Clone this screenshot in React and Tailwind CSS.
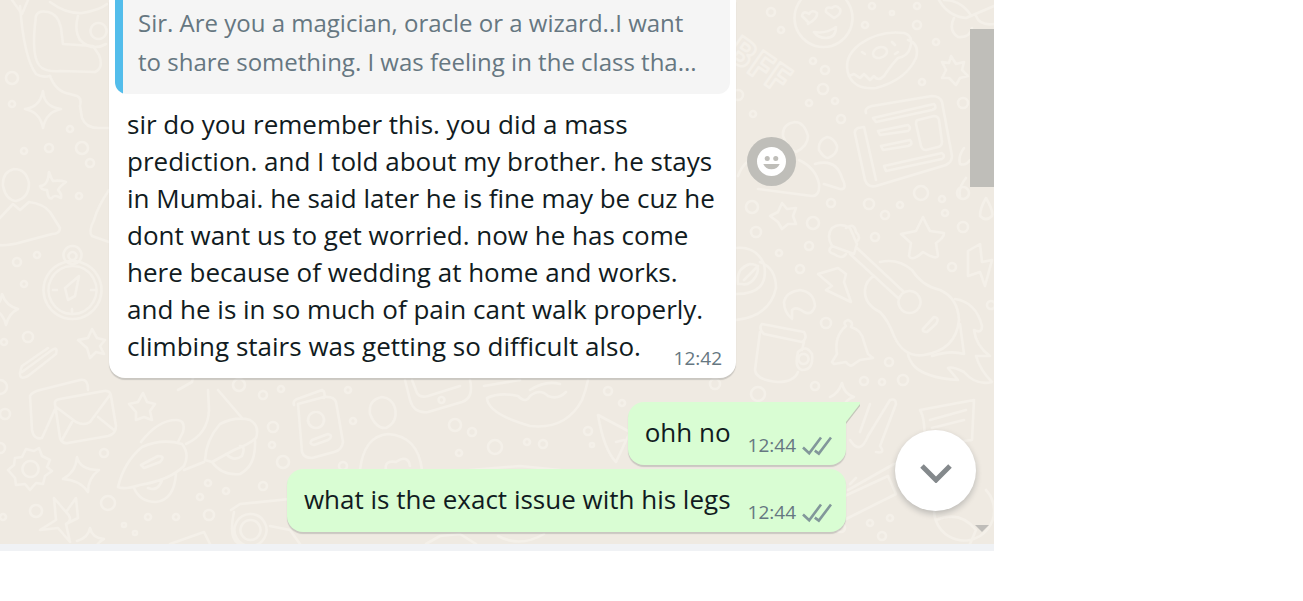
const quoteLines = [
  "Sir. Are you a magician, oracle or a wizard..I want",
  "to share something. I was feeling in the class tha...",
];

const messageLines = [
  "sir do you remember this. you did a mass",
  "prediction. and I told about my brother. he stays",
  "in Mumbai. he said later he is fine may be cuz he",
  "dont want us to get worried. now he has come",
  "here because of wedding at home and works.",
  "and he is in so much of pain cant walk properly.",
  "climbing stairs was getting so difficult also.",
];

const replies = [
  { text: "ohh no", time: "12:44", tail: true },
  { text: "what is the exact issue with his legs", time: "12:44", tail: false },
];

// x, y, radius
const dots = [
  [12, 78, 7], [12, 104, 4], [70, 129, 4], [24, 151, 4], [49, 148, 5], [82, 148, 7],
  [90, 163, 5], [79, 196, 4], [17, 262, 5], [37, 255, 4], [24, 284, 4], [4, 342, 4],
  [28, 337, 6], [5, 414, 6], [0, 387, 8], [0, 448, 6], [104, 453, 5], [36, 511, 7],
  [108, 503, 8], [3, 517, 4], [148, 517, 4], [124, 525, 3], [135, 533, 3], [176, 517, 4],
  [209, 515, 6], [200, 497, 4], [208, 483, 4], [226, 491, 4], [263, 486, 5], [283, 462, 7],
  [273, 427, 6], [272, 445, 4], [263, 395, 5], [281, 389, 4], [239, 385, 7], [348, 390, 4],
  [353, 421, 4], [455, 425, 7], [472, 432, 5], [495, 447, 8], [459, 453, 4], [527, 442, 4],
  [543, 444, 5], [588, 431, 5], [592, 445, 3], [608, 391, 5], [622, 403, 4], [343, 466, 5],
  [715, 384, 6], [758, 394, 8], [815, 386, 5], [841, 528, 5], [870, 523, 4], [882, 536, 5],
  [890, 518, 4], [771, 12, 5], [781, 30, 4], [872, 6, 4], [892, 13, 3], [917, 6, 4],
  [917, 25, 5], [865, 25, 4], [936, 42, 4], [922, 82, 4], [813, 61, 4], [825, 70, 5],
  [823, 89, 6], [809, 103, 4], [835, 101, 4], [841, 119, 5], [753, 114, 4], [738, 95, 6],
  [963, 103, 6], [985, 55, 5], [988, 75, 4], [921, 193, 8], [942, 199, 4], [752, 207, 7],
  [756, 232, 6], [831, 203, 5], [869, 204, 6], [885, 215, 5], [900, 205, 4], [813, 223, 7],
  [809, 246, 5], [779, 253, 4], [800, 269, 5], [875, 237, 5], [963, 193, 7], [945, 213, 4],
  [963, 227, 6], [952, 267, 5], [991, 305, 5], [826, 323, 6], [889, 362, 5], [864, 381, 5],
  [882, 382, 4], [903, 380, 6],
];

const doodles = [
  // mug and hands, top left
  "M20 6Q24 58 36 74Q42 78 50 76M36 16Q30 60 42 68Q48 72 60 71L95 72Q104 68 99 55L93 46L63 44L61 28Q58 14 48 12Q38 10 36 16M50 2Q66 14 82 13Q100 10 107 4",
  "M50 76Q56 92 70 94L77 96Q82 98 80 106L82 118Q86 128 98 128L109 128",
  "M78 16Q74 30 80 40Q92 52 106 44M98 23a8 8 0 1 0 1 0M12 0L22 14L28 0",
  // sparkles
  "M43 91Q44 107 61 109Q46 112 43 128Q40 112 25 109Q40 107 43 91Z",
  "M49 172Q51 178 53 181Q60 180 66 182Q60 186 58 190Q62 194 61 198Q54 194 52 198Q48 200 47 190Q41 190 40 186Q48 186 49 172Z",
  "M2 294Q6 306 18 309Q9 313 6 325Q3 312 -8 309Q0 306 2 294Z",
  "M77 457Q80 470 99 470Q88 478 88 492Q80 480 63 479Q76 472 77 457Z",
  "M90 528Q92 538 104 539Q96 543 94 552M77 541Q88 538 90 528",
  "M842 383Q844 394 854 397Q845 399 842 410M842 383Q838 394 830 397",
  // people, left
  "M14 169Q2 172 3 186Q6 200 16 201Q29 198 29 183Q26 169 14 169M-2 220L13 204L20 210L29 202Q44 204 50 212L60 228Q60 234 52 234L22 242Q8 246 -2 245",
  "M109 190Q98 206 94 220Q88 232 92 236L109 242",
  // compass
  "M72 261a29 29 0 1 0 1 0M72 266a24 24 0 1 0 1 0M72 246a9 9 0 1 0 1 0M72 252a4 4 0 1 0 1 0M79 276L65 288L68 300L75 296ZM53 290h4M91 290h4M72 309v3",
  // paper clip
  "M22 372L52 350Q58 346 56 354L28 376Q16 382 22 366L48 348",
  // envelopes
  "M56 407L42 438Q34 440 32 430L30 396Q32 392 40 390L80 380Q88 378 88 390M55 404Q54 400 60 399L104 391Q110 390 111 396L116 426Q116 434 108 436L68 443Q62 444 60 438ZM56 407L76 422Q84 426 90 422L110 395M62 440L72 422M114 430L98 417",
  // gear
  "M26 449L34 451L39 448L42 456L50 460L47 467L52 471L45 476L43 484L36 483L30 490L25 484L16 485L15 478L8 470L14 465L15 458L22 457ZM30 461a8 8 0 1 0 1 0",
  // scooter
  "M118 487Q124 462 142 447Q162 438 182 444Q190 454 184 466Q170 480 140 485Q124 490 118 487M141 442Q158 420 176 420Q186 420 183 432L178 442M141 465L158 456Q166 456 160 462L144 468ZM134 488Q140 502 156 502Q174 500 176 474M148 488Q158 492 162 480M186 444Q208 434 209 410L208 390M218 390L242 418M184 470L204 462M205 460Q206 440 220 424Q236 416 250 420Q260 426 256 438Q250 444 234 450L212 462ZM212 462Q222 476 240 474Q256 466 255 441M226 454Q234 462 242 456Q246 446 240 446M178 390L192 382L194 374",
  // flower cross
  "M54 498L66 512L76 498L78 518L66 524L70 542L58 528L40 530L56 520ZM66 512Q74 520 66 524",
  // passport
  "M294 405Q292 400 300 398L322 390Q326 392 324 398M298 404L324 397Q334 396 336 402L343 442Q342 450 334 452L312 458Q304 458 302 452ZM315 412a8 8 0 1 0 2 0M312 440L328 434Q334 436 328 440L314 445Q308 444 312 440",
  // person
  "M382 397Q368 400 370 414Q376 429 386 428Q398 422 395 408Q392 398 382 397M360 470Q364 436 388 434Q418 436 422 470M386 470Q384 460 396 462Q408 454 410 466",
  // tablet
  "M405 380L410 400Q414 414 428 412L462 402Q474 398 470 380M412 380L417 393Q420 398 428 396L460 386M441 397a3 3 0 1 0 1 0",
  // pizza
  "M484 386L520 380M487 398Q500 392 518 396Q526 404 530 396Q540 388 548 396Q558 400 566 392M487 398Q488 414 530 426Q566 430 582 400Q586 390 588 380M530 390Q546 380 560 384",
  // triangle by the reply
  "M598 415L630 432L616 462Q604 450 598 415M616 442L624 440",
  // camera
  "M231 510L240 504L300 498M234 512Q228 540 240 544M250 514a16 16 0 1 0 1 0M250 520a10 10 0 1 0 1 0M270 526L290 530L300 544",
  "M170 544L204 532L210 544M470 470L520 466L560 470M426 544L440 536L460 534L476 544M498 536Q520 548 544 534",
  // heart-eyed face
  "M823 -11a29 29 0 1 0 1 0M808 22L802 16Q803 10 809 14Q812 9 817 13Q818 18 808 24ZM834 18L826 12Q825 6 832 8Q836 4 840 9Q842 14 834 18M814 32Q826 34 836 27Q836 38 826 38Q818 38 814 32",
  // donut
  "M849 76Q842 58 860 44Q880 30 904 33Q914 36 910 48Q908 56 898 58Q892 64 884 76Q878 82 874 76L870 80L864 74L860 78L854 74ZM849 76Q856 90 876 88Q906 80 916 58Q920 44 908 40M873 54a7 5 -20 1 0 14 -3a7 5 -20 1 0 -14 3M862 52l3 2M892 42l3 3M895 54l3 -2",
  // newspaper
  "M866 113Q864 108 872 106L932 96Q940 96 942 102L952 156Q952 162 946 165L876 186Q868 188 865 180L855 134Q854 130 858 128L864 127L876 180M873 118L934 104Q938 108 932 110L876 122ZM878 131L908 125Q912 128 908 131L880 135ZM881 146L910 140Q914 144 908 146L883 150ZM884 166L942 153Q946 156 942 159L886 171ZM918 120L934 116Q938 116 939 120L942 142Q942 146 938 147L926 150Q922 150 921 146L916 124Q916 120 918 120",
  // family
  "M795 122Q782 124 783 136Q788 150 796 152Q808 146 808 136Q804 122 795 122M827 137Q818 140 819 150Q824 158 828 158Q838 154 837 146Q834 138 827 137M799 160Q816 168 819 184Q820 196 812 196L758 189M815 164Q836 158 842 178Q848 190 840 189L824 184M738 176Q744 160 756 158",
  // baby, top right
  "M939 0Q948 16 966 18Q980 12 994 6M954 18Q948 30 958 37Q970 38 972 28M976 16Q980 26 994 24M944 0Q960 0 970 14",
  // stars
  "M951 56L956 64L964 62L962 70L968 76L960 78L956 85L949 78L942 78L946 70L942 62L949 63Z",
  "M782 203L787 209L796 208L793 216L796 224L788 224L782 229L778 222L770 216L778 212Z",
  "M92 329L97 338L105 340L100 346L104 354L96 352L90 358L87 348L78 340L88 338Z",
  "M143 393L147 402L155 404L150 411L152 420L144 417L136 420L136 412L129 404L138 402Z",
  "M923 217Q926 224 930 231L944 233Q944 238 936 243L938 256Q936 260 923 252Q912 262 909 256L911 243L901 234L916 231Z",
  // drops
  "M986 198Q994 212 992 216Q986 222 980 216Q980 208 986 198M964 148Q958 156 960 164Q966 166 970 160M966 178Q958 188 960 196",
  // bolts
  "M818 274L838 268L846 274L844 282L851 302L826 290L832 286Z",
  "M968 251L980 244L982 262L992 260L985 286L980 272L968 276Z",
  // camera lens
  "M736 248Q756 246 764 264Q770 294 736 294M760 262Q776 268 776 288Q770 316 736 320M738 284Q736 268 750 264Q762 264 756 276Q750 286 742 284ZM744 280L758 266",
  // cashew
  "M792 319Q784 312 784 302Q786 292 800 290Q814 292 815 306Q812 316 804 312Q796 306 792 310Z",
  // guitar
  "M854 254L832 246Q826 236 832 228Q840 222 850 228L857 244ZM846 228Q854 222 856 232Q862 238 856 242M832 246Q826 252 834 254Q842 260 846 254M857 248L904 292M850 254L898 298M909 291a11 11 0 1 0 1 0M880 262Q898 258 912 270Q922 286 940 290Q958 298 959 320Q956 350 924 355Q904 358 894 336Q888 320 880 312Q864 304 865 290Q866 280 874 276M923 329L934 317Q940 318 936 324L927 332Q922 332 923 329",
  "M955 299Q976 302 982 326Q982 334 974 330Q976 346 990 356L976 356Q980 370 992 382Q976 386 964 372Q952 366 948 368L958 380Q926 378 914 366Q908 358 908 354M960 324L964 354Q950 350 932 356",
  // beer mug
  "M762 324L804 332Q808 338 802 342L764 334Q758 328 762 324M760 332L755 370Q756 380 778 382Q794 382 798 372M804 342L802 350M798 352Q806 344 812 354Q814 370 802 370Q794 368 798 352M803 354a5 5 0 1 0 1 0",
  // bell
  "M846 326Q842 322 848 320Q854 322 851 327Q862 330 864 342L868 354L873 358L860 360L854 364Q850 368 846 362L834 364L832 362L837 354Q834 336 846 326Z",
  // brushes and banner
  "M850 440Q860 456 868 436L890 400Q896 398 896 404L880 446Q886 454 876 452M870 404L860 432M920 410L974 400L972 440L924 446Q926 420 920 410M930 420L966 410M932 428L964 420",
  // ruler and ball
  "M848 490L894 464M850 484L856 478M836 500L888 476L896 494L844 520M936 500a30 30 0 1 0 50 -10M936 520Q960 510 976 530L970 544",
];

function ChatWallpaper() {
  return (
    <svg
      className="absolute inset-0 h-full w-full"
      viewBox="0 0 994 544"
      preserveAspectRatio="xMinYMin slice"
      fill="none"
      stroke="#f4f0e9"
      strokeWidth="2.6"
      strokeLinecap="round"
      strokeLinejoin="round"
      aria-hidden="true"
    >
      {dots.map(([x, y, r]) => (
        <circle key={`${x}-${y}`} cx={x} cy={y} r={r - 1} />
      ))}
      {doodles.map((d) => (
        <path key={d} d={d} />
      ))}
      <text x="724" y="56" fontSize="38" fontWeight="700" transform="rotate(35 724 56)">
        BFF
      </text>
    </svg>
  );
}

function DoubleCheck() {
  return (
    <svg className="h-5 w-[30px]" viewBox="0 0 30 20" fill="none" stroke="#82979a" strokeWidth="2.6" aria-label="Delivered">
      <path d="M1 11.5L7.2 17.3L19 1.5" />
      <path d="M12.8 14.6L16.8 17.6L29 1.5" />
    </svg>
  );
}

function IncomingMessage() {
  return (
    <div className="flex items-start gap-[11px]">
      <article className="flex w-[627px] flex-col rounded-b-2xl bg-white px-1.5 pb-2 shadow-[0_2px_1px_rgba(11,20,26,0.16)]">
        <blockquote className="overflow-hidden rounded-b-xl bg-[#f5f5f5] text-2xl leading-[39px] text-[#667781]">
          <div className="border-l-8 border-[#53bdeb] pt-[3px] pr-3 pb-[13px] pl-[15px]">
            {quoteLines.map((line) => (
              <span key={line} className="block whitespace-nowrap">{line}</span>
            ))}
          </div>
        </blockquote>
        <p className="mt-3 pl-3 text-[26px] leading-[37px] text-[#111b21]">
          {messageLines.map((line) => (
            <span key={line} className="block whitespace-nowrap">{line}</span>
          ))}
        </p>
        <time className="-mt-[18px] self-end pr-2 text-[19px] leading-[23px] text-[#667781]">12:42</time>
      </article>
      <button
        type="button"
        aria-label="React to message"
        className="mt-[137px] flex size-[49px] shrink-0 items-center justify-center rounded-full bg-[#bfbeb9]"
      >
        <svg className="size-[29px]" viewBox="0 0 30 30" aria-hidden="true">
          <circle cx="15" cy="15" r="15" fill="#fff" />
          <circle cx="10.6" cy="12" r="2.6" fill="#bfbeb9" />
          <circle cx="19.4" cy="12" r="2.6" fill="#bfbeb9" />
          <path d="M6.500 17.500h17c-1.500 3.700-4.500 5.500-8.500 5.500s-7-1.800-8.500-5.500z" fill="#bfbeb9" />
        </svg>
      </button>
    </div>
  );
}

function OutgoingMessage({ text, time, tail }) {
  return (
    <article
      className={`relative flex h-[63px] items-end gap-[17px] self-end bg-[#d9fdd3] pr-3.5 pl-[17px] shadow-[0_2px_1px_rgba(11,20,26,0.16)] ${
        tail ? "rounded-2xl rounded-tr-none" : "rounded-2xl"
      }`}
    >
      {tail && (
        <svg className="absolute top-0 left-full h-[22px] w-3.5" viewBox="0 0 14 22" aria-hidden="true">
          <path d="M0 0H14V4L0 22Z" fill="#c3c6b9" />
          <path d="M0 0H14V2L0 20Z" fill="#d9fdd3" />
        </svg>
      )}
      <p className="pb-3.5 text-[26px] leading-[37px] whitespace-nowrap text-[#111b21]">{text}</p>
      <div className="flex items-center gap-1.5 pb-2 text-[19px] leading-[23px] text-[#667781]">
        <time>{time}</time>
        <DoubleCheck />
      </div>
    </article>
  );
}

export default function App() {
  return (
    <div className="min-h-screen overflow-hidden bg-white font-['Open_Sans','Noto_Sans',sans-serif]">
      <main className="w-full max-w-[994px] border-b-[7px] border-[#f0f2f5]">
        <div className="relative flex overflow-hidden bg-[#efeae2]">
          <ChatWallpaper />

          <section className="relative flex min-w-0 flex-1 flex-col gap-1 pr-[124px] pb-3 pl-[109px]">
            <div className="mb-5">
              <IncomingMessage />
            </div>
            {replies.map((reply) => (
              <OutgoingMessage key={reply.text} {...reply} />
            ))}
          </section>

          <div className="relative flex w-6 shrink-0 flex-col items-center justify-between pt-[29px] pb-3">
            <div className="h-[158px] w-full bg-[#bfbeb9]" />
            <svg className="h-[7px] w-3.5" viewBox="0 0 14 7" aria-hidden="true">
              <path d="M0 0H14L7 7Z" fill="#bfbdb9" />
            </svg>
          </div>

          <button
            type="button"
            aria-label="Scroll to bottom"
            className="absolute right-[18px] bottom-[33px] flex size-[81px] items-center justify-center rounded-full bg-white shadow-[0_3px_6px_rgba(11,20,26,0.22)]"
          >
            <svg className="h-6 w-8" viewBox="0 0 32 24" fill="none" stroke="#84898c" strokeWidth="5" aria-hidden="true">
              <path d="M2 7L16 21L30 7" />
            </svg>
          </button>
        </div>
      </main>
    </div>
  );
}
